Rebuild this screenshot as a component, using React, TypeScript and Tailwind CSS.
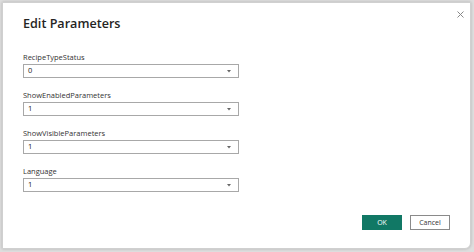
import React from "react";

const fields = [
  { label: "RecipeTypeStatus", value: "0" },
  { label: "ShowEnabledParameters", value: "1" },
  { label: "ShowVisibleParameters", value: "1" },
  { label: "Language", value: "1" },
];

function Caret() {
  return (
    <svg width="4" height="3" viewBox="0 0 4 3">
      <path d="M0 0 L4 0 L2 2.5 Z" fill="#666" />
    </svg>
  );
}

export default function App() {
  return (
    <div
      className="w-[474px] h-[252px] bg-[#dedede] p-[2px] pr-[3px] pb-[3px]"
      style={{ fontFamily: '"Open Sans", "Noto Sans", sans-serif' }}
    >
      <div className="relative h-full w-full bg-white rounded-br-[6px] border border-[#d0d0d0] shadow-[0_0_3px_rgba(0,0,0,0.2)] flex flex-col pl-[20px] pr-[20px]">
        <button className="absolute right-[6px] top-[8px] leading-none">
          <svg width="7" height="7" viewBox="0 0 7 7">
            <path d="M0.5 0.5 L6.5 6.5 M6.5 0.5 L0.5 6.5" stroke="#888" strokeWidth="1" />
          </svg>
        </button>
        <div className="pt-[13px] text-[12.6px] leading-[16px] font-semibold text-[#252423]">
          Edit Parameters
        </div>
        <div className="mt-[20px] flex flex-col gap-[12px]">
          {fields.map((f) => (
            <div key={f.label} className="flex flex-col">
              <div className="text-[7.5px] leading-[11px] text-[#333]">{f.label}</div>
              <div className="mt-[1px] w-[216px] h-[14px] border border-[#a8a8a8] flex items-center justify-between pl-[4px] pr-[7px] text-[7.5px] text-[#222]">
                <span>{f.value}</span>
                <span className="flex items-center"><Caret /></span>
              </div>
            </div>
          ))}
        </div>
        <div className="mt-auto mb-[18px] flex justify-end gap-[8px]">
          <button className="w-[40px] h-[15px] bg-[#117865] text-white text-[7px] leading-none">OK</button>
          <button className="w-[40px] h-[15px] bg-white border border-[#8a8a8a] text-[#333] text-[7px] leading-none">Cancel</button>
        </div>
      </div>
    </div>
  );
}
